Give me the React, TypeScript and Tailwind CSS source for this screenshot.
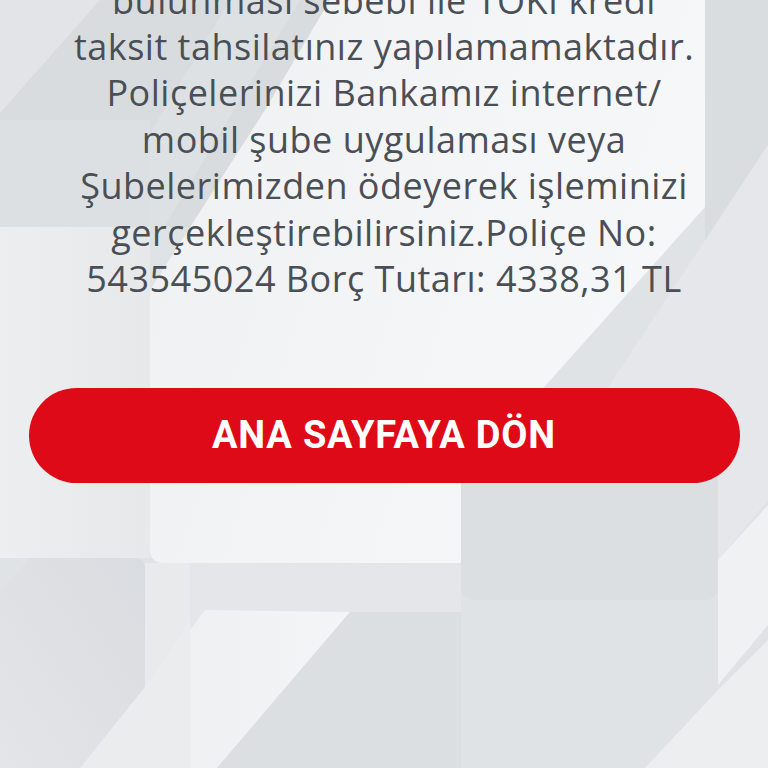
import React from "react";

const lines = [
  "bulunması sebebi ile TOKİ kredi",
  "taksit tahsilatınız yapılamamaktadır.",
  "Poliçelerinizi Bankamız internet/",
  "mobil şube uygulaması veya",
  "Şubelerimizden ödeyerek işleminizi",
  "gerçekleştirebilirsiniz.Poliçe No:",
  "543545024 Borç Tutarı: 4338,31 TL",
];

function Background() {
  return (
    <svg
      className="absolute inset-0 h-full w-full"
      viewBox="0 0 768 768"
      preserveAspectRatio="none"
    >
      <defs>
        <linearGradient id="panel" x1="0" y1="0" x2="1" y2="0.3">
          <stop offset="0" stopColor="#eef0f2" />
          <stop offset="0.6" stopColor="#f4f5f7" />
          <stop offset="1" stopColor="#f6f7f8" />
        </linearGradient>
        <linearGradient id="leftcol" x1="0" y1="0" x2="1" y2="0">
          <stop offset="0" stopColor="#eceef0" />
          <stop offset="1" stopColor="#e6e8ea" />
        </linearGradient>
        <linearGradient id="darkshape" x1="1" y1="0" x2="0" y2="1">
          <stop offset="0" stopColor="#d9dce0" />
          <stop offset="1" stopColor="#e3e5e8" />
        </linearGradient>
        <linearGradient id="para" x1="0" y1="0" x2="1" y2="0">
          <stop offset="0" stopColor="#eef0f2" />
          <stop offset="1" stopColor="#f4f5f7" />
        </linearGradient>
      </defs>
      <rect x="0" y="0" width="768" height="768" fill="#e0e3e6" />
      {/* top-left zone */}
      <rect x="0" y="0" width="340" height="227" fill="#d9dcdf" />
      <polygon points="0,0 100,0 0,113" fill="#e2e4e7" />
      <polygon points="230,0 300,0 120,300 50,300" fill="#dee1e4" />
      <rect x="0" y="120" width="150" height="107" fill="#dde0e3" />
      {/* left column */}
      <rect x="0" y="227" width="150" height="331" fill="url(#leftcol)" />
      {/* right dark column top */}
      <rect x="705" y="0" width="63" height="300" fill="#dadde0" />
      {/* light diagonal band on right */}
      <polygon points="768,145 768,500 718,560 718,480 547,480" fill="#e5e7ea" />
      {/* central light panel */}
      <path
        d="M330,0 L705,0 L705,207 L470,470 L470,563 L164,563 Q150,563 150,549 L150,290 L265,110 Z"
        fill="url(#panel)"
      />
      {/* bottom right rect */}
      <rect x="461" y="440" width="257" height="160" rx="12" fill="#dcdfe2" />
      <polygon points="768,505 768,625 718,685 718,560" fill="#f0f1f3" />
      <polygon points="718,690 768,640 768,768 645,768" fill="#eceef0" />
      {/* bottom left */}
      <rect x="145" y="563" width="45" height="205" fill="#e8eaec" />
      <rect x="190" y="563" width="271" height="205" fill="#e4e6e9" />
      <path
        d="M30,558 L133,558 Q145,558 145,570 L145,687 L80,768 L0,768 L0,592 Z"
        fill="url(#darkshape)"
      />
      <polygon points="145,687 190,620 190,768 80,768" fill="#eaecee" />
      <polygon points="205,610 350,612 217,768 190,768 190,630" fill="url(#para)" />
      <polygon points="350,612 461,612 461,768 217,768" fill="#dcdfe2" />
    </svg>
  );
}

export default function App() {
  return (
    <div className="relative h-screen w-full overflow-hidden bg-[#e0e3e6]">
      <Background />
      <div className="relative flex flex-col items-center">
        <p
          className="mt-[-22.5px] text-center text-[36px] leading-[46.4px] tracking-[0.5px] text-[#4a4f55]"
          style={{ fontFamily: "'Open Sans', Lato, sans-serif" }}
        >
          {lines.map((l, i) => (
            <span key={i} className="block whitespace-nowrap">
              {l}
            </span>
          ))}
        </p>
        <button
          className="mt-[86px] flex h-[95px] w-[711px] items-center justify-center rounded-full bg-[#df0a17] text-[38px] font-bold tracking-[0.8px] text-white"
          style={{ fontFamily: "Roboto, 'Liberation Sans', sans-serif" }}
        >
          ANA SAYFAYA DÖN
        </button>
      </div>
    </div>
  );
}
